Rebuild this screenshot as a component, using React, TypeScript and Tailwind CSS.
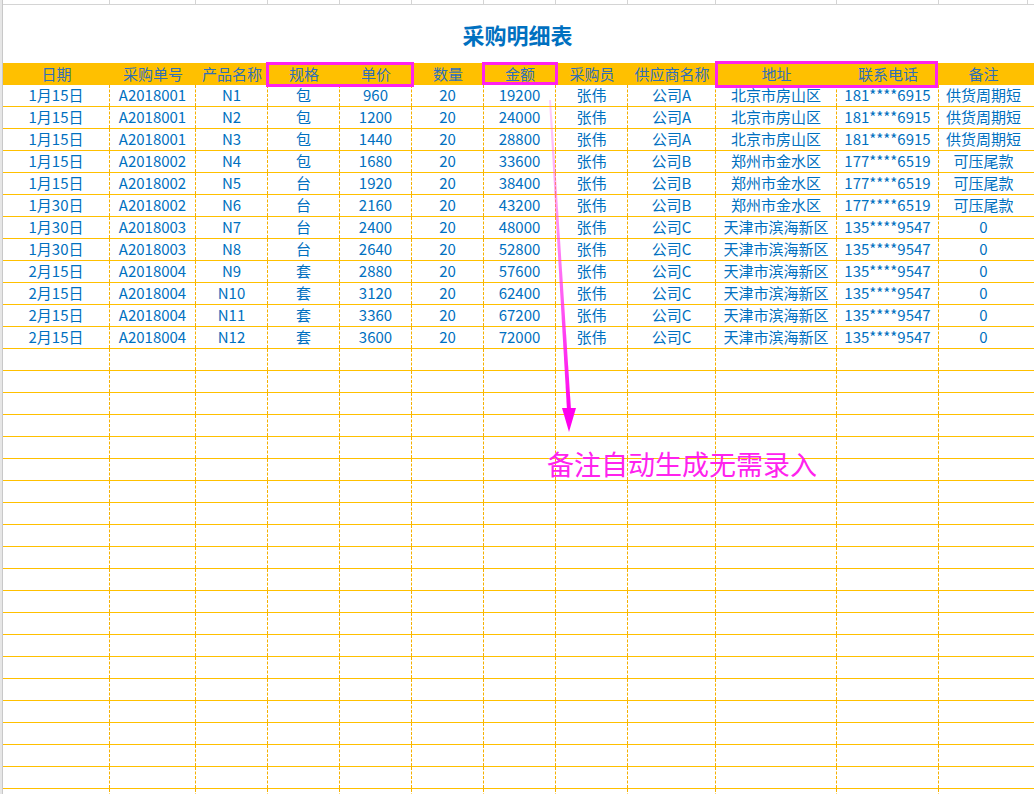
import React from 'react';

const cols = [107, 86, 72, 72, 72, 72, 72, 72, 88, 121, 102, 89];
const headers = ['日期', '采购单号', '产品名称', '规格', '单价', '数量', '金额', '采购员', '供应商名称', '地址', '联系电话', '备注'];

const addr: Record<string, [string, string, string]> = {
  A: ['北京市房山区', '181****6915', '供货周期短'],
  B: ['郑州市金水区', '177****6519', '可压尾款'],
  C: ['天津市滨海新区', '135****9547', '0'],
};

const raw: [string, string, string, string, string][] = [
  ['1月15日', 'A2018001', '包', '960', 'A'],
  ['1月15日', 'A2018001', '包', '1200', 'A'],
  ['1月15日', 'A2018001', '包', '1440', 'A'],
  ['1月15日', 'A2018002', '包', '1680', 'B'],
  ['1月15日', 'A2018002', '台', '1920', 'B'],
  ['1月30日', 'A2018002', '台', '2160', 'B'],
  ['1月30日', 'A2018003', '台', '2400', 'C'],
  ['1月30日', 'A2018003', '台', '2640', 'C'],
  ['2月15日', 'A2018004', '套', '2880', 'C'],
  ['2月15日', 'A2018004', '套', '3120', 'C'],
  ['2月15日', 'A2018004', '套', '3360', 'C'],
  ['2月15日', 'A2018004', '套', '3600', 'C'],
];

const rows = raw.map((r, i) => [
  r[0], r[1], `N${i + 1}`, r[2], r[3], '20', String(Number(r[3]) * 20), '张伟', `公司${r[4]}`, ...addr[r[4]],
]);

const gridCols = { gridTemplateColumns: cols.map((c) => `${c}px`).join(' ') };

function Row({ cells, header }: { cells: string[]; header?: boolean }) {
  return (
    <div className={`grid h-[22px] ${header ? 'bg-[#ffc000]' : 'border-b border-[#ffc000]'}`} style={gridCols}>
      {cells.map((c, i) => (
        <div
          key={i}
          className={`flex items-center justify-center text-[15px] whitespace-nowrap overflow-hidden ${header ? 'text-[#2f6fb8]' : 'text-[#0070c0]'} ${!header && i < cells.length - 1 ? 'border-r border-dashed border-[#f5b000]' : ''}`}
        >
          {c}
        </div>
      ))}
    </div>
  );
}

export default function App() {
  const empty = Array.from({ length: 21 }, () => Array(12).fill(''));
  return (
    <div className="relative w-[1034px] h-[794px] overflow-hidden bg-white" style={{ fontFamily: '"Noto Sans CJK SC", "Noto Sans", sans-serif' }}>
      <div className="flex">
        <div className="w-[3px] shrink-0 bg-[#e6e6e6] border-r border-[#c8c8c8]" />
        <div className="flex-1">
          <div className="h-[5px] border-b border-[#d4d4d4] grid" style={gridCols}>
            {cols.map((_, i) => (
              <div key={i} className="border-r border-[#d4d4d4]" />
            ))}
          </div>
          <div className="h-[58px] flex items-center justify-center">
            <div className="text-[22px] font-bold text-[#0070c0] ml-[-2px]">采购明细表</div>
          </div>
          <Row cells={headers} header />
          {rows.map((r, i) => (
            <Row key={i} cells={r} />
          ))}
          {empty.map((r, i) => (
            <Row key={'e' + i} cells={r} />
          ))}
        </div>
      </div>

      {/* annotations */}
      <div className="absolute left-[266px] top-[62px] w-[148px] h-[25px] border-[3px] border-[#ff22ee]" />
      <div className="absolute left-[482px] top-[62px] w-[76px] h-[23px] border-[3px] border-[#ff22ee]" />
      <div className="absolute left-[715px] top-[61px] w-[223px] h-[27px] border-[3px] border-[#ff22ee]" />
      <svg className="absolute left-0 top-0" width="1034" height="794">
        <defs>
          <linearGradient id="g" x1="0" y1="0" x2="0" y2="1">
            <stop offset="0" stopColor="#ff66f0" stopOpacity="0.3" />
            <stop offset="1" stopColor="#ff00ee" />
          </linearGradient>
        </defs>
        <polygon points="549,100 551,100 571,410 567,410" fill="url(#g)" />
        <polygon points="562,408 576,408 569,432" fill="#ff00ee" />
      </svg>
      <div className="absolute left-[547px] top-[444px] text-[27px] text-[#ff22ee] whitespace-nowrap">备注自动生成无需录入</div>
    </div>
  );
}
